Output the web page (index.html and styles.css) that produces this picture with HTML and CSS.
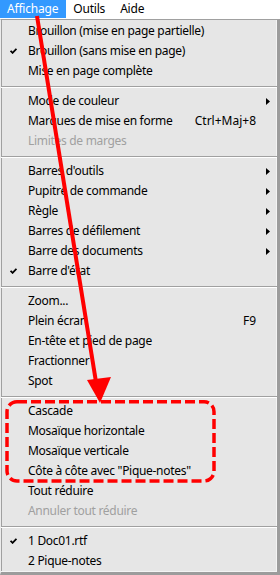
FILE: index.html
```html
<!DOCTYPE html>
<html lang="fr">
<head>
    <meta charset="UTF-8">
    <meta name="viewport" content="width=device-width, initial-scale=1.0">
    <title>Affichage</title>
    <link rel="stylesheet" href="styles.css">
</head>
<body>
    <div class="bar">
        <span class="bar-item open">Affichage</span>
        <span class="bar-item">Outils</span>
        <span class="bar-item">Aide</span>
    </div>

    <div class="menu">
        <div class="item"><span class="mark"></span><span class="label">Brouillon (mise en page partielle)</span></div>
        <div class="item"><span class="mark"><svg class="check" viewBox="0 0 7 6"><path d="M0.6 2.8 L2.6 4.9 L6.4 0.8"/></svg></span><span class="label">Brouillon (sans mise en page)</span></div>
        <div class="item"><span class="mark"></span><span class="label">Mise en page complète</span></div>
        <div class="sep"></div>
        <div class="item"><span class="mark"></span><span class="label">Mode de couleur</span><span class="key"></span><span class="sub"><svg class="arrow" viewBox="0 0 4 7"><path d="M0 0 L4 3.5 L0 7 Z"/></svg></span></div>
        <div class="item"><span class="mark"></span><span class="label">Marques de mise en forme</span><span class="key">Ctrl+Maj+8</span></div>
        <div class="item off"><span class="mark"></span><span class="label">Limites de marges</span></div>
        <div class="sep"></div>
        <div class="item"><span class="mark"></span><span class="label">Barres d'outils</span><span class="key"></span><span class="sub"><svg class="arrow" viewBox="0 0 4 7"><path d="M0 0 L4 3.5 L0 7 Z"/></svg></span></div>
        <div class="item"><span class="mark"></span><span class="label">Pupitre de commande</span><span class="key"></span><span class="sub"><svg class="arrow" viewBox="0 0 4 7"><path d="M0 0 L4 3.5 L0 7 Z"/></svg></span></div>
        <div class="item"><span class="mark"></span><span class="label">Règle</span><span class="key"></span><span class="sub"><svg class="arrow" viewBox="0 0 4 7"><path d="M0 0 L4 3.5 L0 7 Z"/></svg></span></div>
        <div class="item"><span class="mark"></span><span class="label">Barres de défilement</span><span class="key"></span><span class="sub"><svg class="arrow" viewBox="0 0 4 7"><path d="M0 0 L4 3.5 L0 7 Z"/></svg></span></div>
        <div class="item"><span class="mark"></span><span class="label">Barre des documents</span><span class="key"></span><span class="sub"><svg class="arrow" viewBox="0 0 4 7"><path d="M0 0 L4 3.5 L0 7 Z"/></svg></span></div>
        <div class="item"><span class="mark"><svg class="check" viewBox="0 0 7 6"><path d="M0.6 2.8 L2.6 4.9 L6.4 0.8"/></svg></span><span class="label">Barre d'état</span></div>
        <div class="sep"></div>
        <div class="item"><span class="mark"></span><span class="label">Zoom...</span></div>
        <div class="item"><span class="mark"></span><span class="label">Plein écran</span><span class="key">F9</span></div>
        <div class="item"><span class="mark"></span><span class="label">En-tête et pied de page</span></div>
        <div class="item"><span class="mark"></span><span class="label">Fractionner</span></div>
        <div class="item"><span class="mark"></span><span class="label">Spot</span></div>
        <div class="sep"></div>
        <div class="item"><span class="mark"></span><span class="label">Cascade</span></div>
        <div class="item"><span class="mark"></span><span class="label">Mosaïque horizontale</span></div>
        <div class="item"><span class="mark"></span><span class="label">Mosaïque verticale</span></div>
        <div class="item"><span class="mark"></span><span class="label">Côte à côte avec "Pique-notes"</span></div>
        <div class="item"><span class="mark"></span><span class="label">Tout réduire</span></div>
        <div class="item off"><span class="mark"></span><span class="label">Annuler tout réduire</span></div>
        <div class="sep"></div>
        <div class="item"><span class="mark"><svg class="check" viewBox="0 0 7 6"><path d="M0.6 2.8 L2.6 4.9 L6.4 0.8"/></svg></span><span class="label">1 Doc01.rtf</span></div>
        <div class="item"><span class="mark"></span><span class="label">2 Pique-notes</span></div>
    </div>

    <!-- annotation: arrow + dashed frame -->
    <svg class="note" viewBox="0 0 280 575">
        <line x1="37" y1="16" x2="96" y2="382" class="pen"/>
        <polygon points="87,380 111,377 100,403" class="head"/>
        <rect x="7" y="401.7" width="207" height="79.3" rx="10" class="frame"/>
    </svg>
</body>
</html>
```

FILE: styles.css
```css
*{
    margin: 0;
    padding: 0;
    box-sizing: border-box;
}
body{
    width: 280px;
    height: 575px;
    background-color: #fff;
    font-family: "Noto Sans", "Open Sans", sans-serif;
    font-size: 12px;
    color: #000;
    position: relative;
    overflow: hidden;
}
/* barre de menus */
.bar{
    display: flex;
    height: 19px;
    background-color: #fff;
    letter-spacing: -0.2px;
}
.bar-item{
    padding: 0 8px 0 7px;
    line-height: 18px;
    height: 18px;
}
.bar-item.open{
    background-color: #3399ff;
    color: #fff;
}
/* menu deroulant */
.menu{
    width: 280px;
    height: 556px;
    background-color: #e6e6e6;
    border-top: 1px solid #a0a0a0;
    border-left: 1px solid #ececec;
    border-right: 3px solid #9c9c9c;
    border-bottom: 3px solid #9c9c9c;
    box-shadow: inset -1px -1px 0 #f4f4f4, inset 1px 0 0 #a0a0a0;
    padding-top: 1px;
    letter-spacing: -0.3px;
}
.item{
    display: grid;
    grid-template-columns: 27px 1fr auto 21px;
    align-items: center;
    height: 20px;
    line-height: 20px;
    white-space: nowrap;
}
.item.off{
    color: #a0a0a0;
}
.mark{
    display: flex;
    padding-left: 9px;
}
.check{
    width: 7px;
    height: 6px;
    fill: none;
    stroke: #000;
    stroke-width: 1.7;
}
.key{
    text-align: right;
    letter-spacing: 0;
}
.sub{
    display: flex;
    padding-left: 10px;
}
.arrow{
    width: 4px;
    height: 7px;
    fill: #000;
}
/* separateur */
.sep{
    height: 10px;
    padding-top: 5px;
}
.sep::before{
    content: "";
    display: block;
    border-top: 1px solid #a0a0a0;
    border-bottom: 1px solid #fff;
}
/* annotation */
.note{
    position: absolute;
    left: 0;
    top: 0;
    width: 280px;
    height: 575px;
}
.pen{
    stroke: #ff0000;
    stroke-width: 4;
}
.head{
    fill: #ff0000;
}
.frame{
    fill: none;
    stroke: #ff0000;
    stroke-width: 3.5;
    stroke-dasharray: 10 4;
}
```
